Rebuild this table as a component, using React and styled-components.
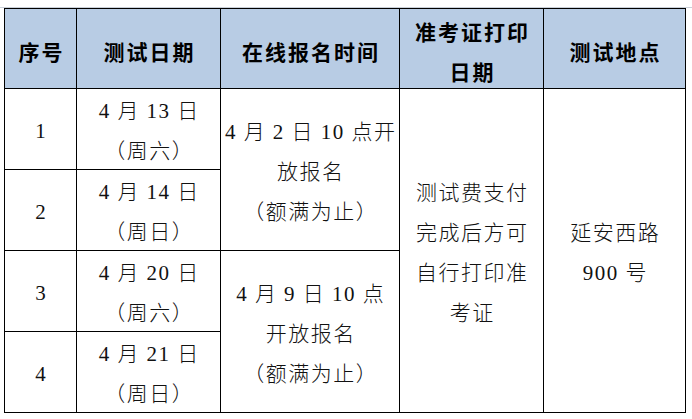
import React from "react";
import styled, { createGlobalStyle } from "styled-components";

const Global = createGlobalStyle`
  html, body { margin: 0; padding: 0; background: #ffffff; }
  body { font-family: "Liberation Serif", "Noto Sans CJK SC", serif; }
`;

const Page = styled.div`
  width: 692px;
  height: 419px;
  padding-top: 7px;
  box-sizing: border-box;
  background: #ffffff;
`;

const TopRule = styled.div`
  height: 1px;
  background: #c9d0d9;
`;

const Grid = styled.div`
  margin-left: 4px;
  width: 682px;
  box-sizing: border-box;
  display: grid;
  grid-template-columns: 71px 143px 178px 143px 141px;
  grid-template-rows: 79px 80px 80px 80px 80px;
  gap: 1px;
  padding: 1px;
  background: #000000;
`;

const Cell = styled.div`
  background: ${(p) => (p.$head ? "#b8cce4" : "#ffffff")};
  grid-row: ${(p) => p.$row || "auto"};
  display: flex;
  flex-direction: column;
  align-items: center;
  justify-content: center;
  padding-top: 4px;
  padding-left: ${(p) => (p.$head ? 2 : 1.5)}px;
  box-sizing: border-box;
  text-align: center;
  color: ${(p) => (p.$head ? "#000000" : "#111111")};
  font-family: ${(p) =>
    p.$head
      ? `"Noto Sans CJK SC", sans-serif`
      : `"Liberation Serif", "Noto Sans CJK SC", serif`};
  font-weight: ${(p) => (p.$head ? 700 : 300)};
  font-size: 21px;
  letter-spacing: ${(p) => (p.$head ? 2 : 1.5)}px;
  line-height: 40px;
`;

const Line = styled.span`
  display: block;
  white-space: nowrap;
`;

const Lines = ({ items }) =>
  items.map((t, i) => <Line key={i}>{t}</Line>);

export default function App() {
  return (
    <>
      <Global />
      <Page>
        <TopRule />
        <Grid>
          <Cell $head>序号</Cell>
          <Cell $head>测试日期</Cell>
          <Cell $head>在线报名时间</Cell>
          <Cell $head>
            <Lines items={["准考证打印", "日期"]} />
          </Cell>
          <Cell $head>测试地点</Cell>

          <Cell>1</Cell>
          <Cell>
            <Lines items={["4 月 13 日", "（周六）"]} />
          </Cell>
          <Cell $row="span 2">
            <Lines items={["4 月 2 日 10 点开", "放报名", "（额满为止）"]} />
          </Cell>
          <Cell $row="span 4">
            <Lines items={["测试费支付", "完成后方可", "自行打印准", "考证"]} />
          </Cell>
          <Cell $row="span 4">
            <Lines items={["延安西路", "900 号"]} />
          </Cell>

          <Cell>2</Cell>
          <Cell>
            <Lines items={["4 月 14 日", "（周日）"]} />
          </Cell>

          <Cell>3</Cell>
          <Cell>
            <Lines items={["4 月 20 日", "（周六）"]} />
          </Cell>
          <Cell $row="span 2">
            <Lines items={["4 月 9 日 10 点", "开放报名", "（额满为止）"]} />
          </Cell>

          <Cell>4</Cell>
          <Cell>
            <Lines items={["4 月 21 日", "（周日）"]} />
          </Cell>
        </Grid>
      </Page>
    </>
  );
}
